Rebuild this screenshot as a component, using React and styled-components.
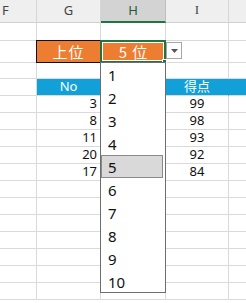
import React from "react";
import styled, { createGlobalStyle } from "styled-components";

const GlobalStyle = createGlobalStyle`
  html, body { margin: 0; padding: 0; background: #ffffff; }
  * { box-sizing: border-box; }
`;

const COLS = ["F", "G", "H", "I", ""];
const ROW_HEIGHTS = [18, 22, 16, 17, ...Array(12).fill(17)];
const SCORES = [
  [3, 99],
  [8, 98],
  [11, 93],
  [20, 92],
  [17, 84],
];
const OPTIONS = [1, 2, 3, 4, 5, 6, 7, 8, 9, 10];

const Sheet = styled.div`
  position: relative;
  width: 246px;
  height: 303px;
  overflow: hidden;
  background: #ffffff;
  font-family: "Noto Sans", "Noto Sans CJK JP", sans-serif;
`;

const Grid = styled.div`
  display: grid;
  grid-template-columns: 37px 64px 65px 63px 40px;
  grid-template-rows: 23px ${ROW_HEIGHTS.map((h) => `${h}px`).join(" ")};
`;

const ColHead = styled.div`
  display: flex;
  align-items: center;
  justify-content: ${(p) => (p.$left ? "flex-start" : "center")};
  padding-left: ${(p) => (p.$left ? "2px" : "0")};
  padding-bottom: 2px;
  background: ${(p) => (p.$active ? "#d3d3d3" : "#efefef")};
  border-right: 1px solid ${(p) => (p.$active ? "#bdbdbd" : "#d6d6d6")};
  border-bottom: ${(p) =>
    p.$active ? "2px solid #217346" : "1px solid #d0d0d0"};
  color: ${(p) => (p.$active ? "#1e5e3a" : "#444444")};
  font-size: 13px;
  font-family: ${(p) =>
    p.$serif ? '"Liberation Serif", serif' : '"Noto Sans", sans-serif'};
`;

const Cell = styled.div`
  display: flex;
  align-items: center;
  justify-content: ${(p) =>
    p.$align === "right" ? "flex-end" : p.$align === "center" ? "center" : "flex-start"};
  padding: 0 3px 1px 3px;
  border-right: 1px solid ${(p) => (p.$blue ? "#12a0d8" : "#dadada")};
  border-bottom: 1px solid #dadada;
  background: ${(p) => (p.$blue ? "#12a0d8" : "#ffffff")};
  color: ${(p) => (p.$blue ? "#ffffff" : "#111111")};
  font-size: 13px;
  line-height: 1;
`;

const OrangeCell = styled.div`
  display: flex;
  align-items: center;
  justify-content: center;
  background: #ed7d31;
  color: #ffffff;
  font-size: 15px;
  font-family: "Noto Sans CJK JP", sans-serif;
  border: 1px solid #111111;
  margin: -1px 0 0 -1px;
  letter-spacing: 1px;
`;

const SelectedCell = styled.div`
  position: relative;
  display: flex;
  align-items: center;
  justify-content: center;
  background: #ed7d31;
  color: #ffffff;
  font-size: 15px;
  font-family: "Noto Sans CJK JP", sans-serif;
  border: 2px solid #217346;
  box-shadow: inset 0 0 0 1px #ffffff;
  margin: -1px 0 0 -1px;
  gap: 5px;
`;

const Handle = styled.span`
  position: absolute;
  right: -3px;
  bottom: -3px;
  width: 5px;
  height: 5px;
  background: #217346;
  border: 1px solid #ffffff;
`;

const ArrowButton = styled.div`
  position: absolute;
  left: 166px;
  top: 42px;
  width: 16px;
  height: 17px;
  background: #ffffff;
  border: 1px solid #a6a6a6;
  display: flex;
  align-items: center;
  justify-content: center;
`;

const List = styled.ul`
  position: absolute;
  left: 100px;
  top: 62px;
  width: 66px;
  height: 231px;
  margin: 0;
  padding: 0;
  list-style: none;
  background: #ffffff;
  border: 1px solid #6e6e6e;
`;

const Option = styled.li`
  height: 23px;
  margin-right: 2px;
  padding-left: ${(p) => (p.$active ? "6px" : "7px")};
  display: flex;
  align-items: center;
  font-size: 15px;
  color: #111111;
  background: ${(p) => (p.$active ? "#d9d9d9" : "transparent")};
  border: ${(p) => (p.$active ? "1px solid #8a8a8a" : "none")};
`;

function DataCell({ row, col }) {
  const blue = row === 3 && col >= 1;
  if (row === 1 && col === 1) return <OrangeCell>上位</OrangeCell>;
  if (row === 1 && col === 2)
    return (
      <SelectedCell>
        <span>5</span>
        <span>位</span>
        <Handle />
      </SelectedCell>
    );
  if (blue) {
    const label = col === 1 ? "No" : col === 3 ? "得点" : "";
    return (
      <Cell $blue $align="center">
        {label}
      </Cell>
    );
  }
  const entry = SCORES[row - 4];
  if (entry && col === 1) return <Cell $align="right">{entry[0]}</Cell>;
  if (entry && col === 3) return <Cell $align="center">{entry[1]}</Cell>;
  return <Cell />;
}

export default function App() {
  return (
    <>
      <GlobalStyle />
      <Sheet>
        <Grid>
          {COLS.map((c, i) => (
            <ColHead key={c + i} $left={i === 0} $active={i === 2} $serif={c === "I"}>
              {c}
            </ColHead>
          ))}
          {ROW_HEIGHTS.map((_, r) =>
            COLS.map((_, c) => <DataCell key={`${r}-${c}`} row={r} col={c} />)
          )}
        </Grid>
        <ArrowButton>
          <svg width="7" height="4" viewBox="0 0 7 4">
            <path d="M0 0 H7 L3.5 4 Z" fill="#555555" />
          </svg>
        </ArrowButton>
        <List>
          {OPTIONS.map((n) => (
            <Option key={n} $active={n === 5}>
              {n}
            </Option>
          ))}
        </List>
      </Sheet>
    </>
  );
}
